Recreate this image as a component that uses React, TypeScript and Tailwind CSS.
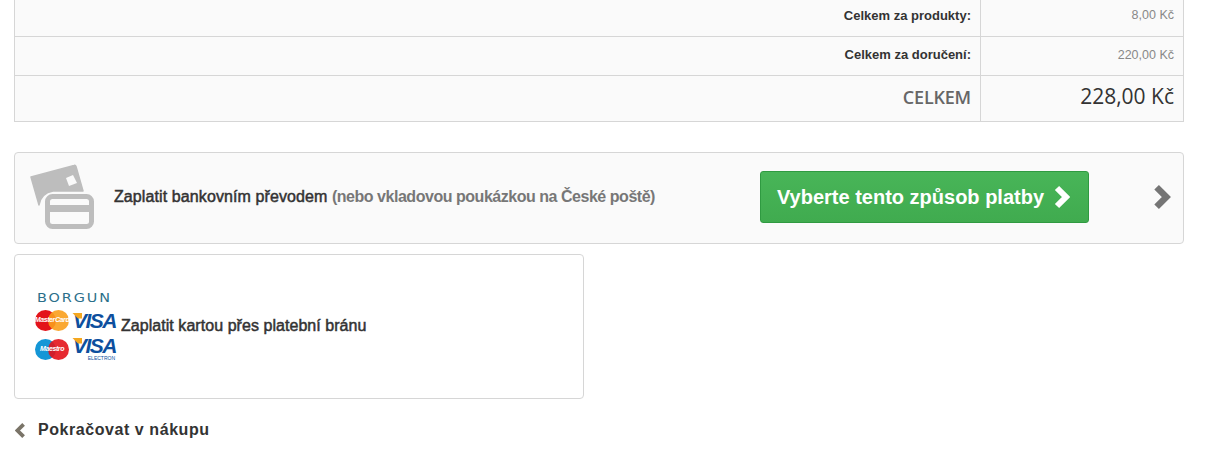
import React from "react";

const Chevron = ({ className, dir = "right", w = 5 }: { className: string; dir?: "right" | "left"; w?: number }) => (
  <svg viewBox="0 0 16 24" className={className} fill="none" stroke="currentColor" strokeWidth={w} strokeLinejoin="miter">
    <path d={dir === "right" ? "M3.5 3 L12.5 12 L3.5 21" : "M12.5 3 L3.5 12 L12.5 21"} />
  </svg>
);

const Row = ({ label, value, className }: { label: string; value: string; className: string }) => (
  <div className={`flex border-b border-[#d6d6d6] ${className}`}>
    <div className="w-[966px] shrink-0 flex items-center justify-end pr-[9px] pb-[2px] border-r border-[#d6d6d6] text-[13px] font-bold text-[#333333]">{label}</div>
    <div className="flex-1 flex items-center justify-end pr-[9px] pb-[2px] text-[12.5px] text-[#888888]">{value}</div>
  </div>
);

const CardsIcon = () => (
  <svg width="66" height="66" viewBox="0 0 66 66" className="shrink-0">
    <g transform="translate(0 1)">
      <path d="M1 12 L44 0.5 Q45.5 0 46 1.5 L53 26 L23 26 Q11 28 9 40 Z" fill="#bdbdbd" stroke="#bdbdbd" strokeWidth="1.5" strokeLinejoin="round" />
      <polygon points="36,13 43,10 47,18 39,21" fill="#fafafa" />
      <rect x="17.5" y="31.5" width="44" height="30" rx="5" fill="none" stroke="#bdbdbd" strokeWidth="5" />
      <rect x="15" y="40" width="49" height="7" fill="#bdbdbd" />
    </g>
  </svg>
);

const Pair = ({ a, b, text, sub }: { a: string; b: string; text: string; sub?: boolean }) => (
  <div className="flex items-start h-[29px]">
    <div className="relative w-[36px] h-[21px] shrink-0">
      <span className={`absolute left-0 top-0 w-[21px] h-[21px] rounded-full ${a}`} />
      <span className={`absolute left-[13px] top-0 w-[21px] h-[21px] rounded-full ${b} opacity-90`} />
      <span className="absolute left-0 w-[34px] h-[21px] flex items-center justify-center text-[7px] font-bold italic text-white tracking-[-0.4px] whitespace-nowrap">{text}</span>
    </div>
    <div className="ml-[2px] w-[43px] flex flex-col text-[#0d4f9e]">
      <div className={`relative h-[16px] leading-[16px] italic font-bold text-[21px] tracking-[-1.5px] ${sub ? "-mt-[1px]" : "mt-[3px]"}`}>
        VISA
        <span className="absolute left-[-1px] top-[0px] w-[10px] h-[6px] bg-[#f4a71f] [clip-path:polygon(0_0,100%_0,100%_100%,60%_100%)]" />
      </div>
      {sub && <span className="self-end mt-[1px] mr-[1px] text-[5px] leading-[6px]">ELECTRON</span>}
    </div>
  </div>
);

export default function App() {
  return (
    <div className="w-[1213px] h-[469px] bg-white overflow-hidden font-['Liberation_Sans',Arial,sans-serif] text-[#333333]">
      <div className="ml-[14px] w-[1170px]">
        <div className="bg-[#fafafa] border-x border-[#d6d6d6]">
          <Row className="h-[40px] -mt-[3px]" label="Celkem za produkty:" value="8,00 Kč" />
          <Row className="h-[39px]" label="Celkem za doručení:" value="220,00 Kč" />
          <div className="flex border-b border-[#d6d6d6] h-[46px]">
            <div className="w-[966px] shrink-0 flex items-center justify-end pr-[9px] pb-[3px] border-r border-[#d6d6d6] font-['Open_Sans',sans-serif] text-[18px] font-semibold tracking-[-0.2px] text-[#666666]">CELKEM</div>
            <div className="flex-1 flex items-center justify-end pr-[9px] pb-[3px] font-['Open_Sans',sans-serif] text-[21px] font-medium text-[#333333]">228,00 Kč</div>
          </div>
        </div>

        <div className="mt-[30px] h-[92px] bg-[#fafafa] border border-[#d6d6d6] rounded-[4px] flex items-center pl-[15px] pb-[2px]">
          <CardsIcon />
          <div className="ml-[18px] w-[646px] shrink-0 text-[16px] font-bold whitespace-nowrap">
            <span className="font-normal tracking-[0.1px] [-webkit-text-stroke:0.5px_#333333]">Zaplatit bankovním převodem</span>{" "}
            <span className="text-[#777777] tracking-[-0.47px]">(nebo vkladovou poukázkou na České poště)</span>
          </div>
          <div className="w-[329px] h-[52px] shrink-0 rounded-[3px] bg-gradient-to-b from-[#48b558] to-[#40ab4f] border border-[#2f9a41] flex items-center justify-center gap-[9px] text-white font-bold text-[20px] pr-[2px]">
            Vyberte tento způsob platby
            <Chevron w={6} className="w-[17px] h-[24px] text-white" />
          </div>
          <Chevron w={6} className="ml-[63px] w-[19px] h-[26px] text-[#757575]" />
        </div>

        <div className="mt-[10px] w-[570px] h-[145px] bg-white border border-[#d6d6d6] rounded-[4px] flex items-center pl-[20px]">
          <div className="w-[85px] shrink-0 pt-[5px]">
            <div className="origin-left scale-x-[1.2] text-[#2b6f8a] text-[12px] leading-[14px] tracking-[1.6px] ml-[2px] mb-[5px] font-['DejaVu_Sans',sans-serif] whitespace-nowrap">BORGUN</div>
            <Pair a="bg-[#e3131b]" b="bg-[#f99f1c]" text="MasterCard" />
            <Pair a="bg-[#1496d6]" b="bg-[#e3131b]" text="Maestro" sub />
          </div>
          <div className="ml-[1px] pb-[2px] text-[16px] tracking-[0.05px] whitespace-nowrap [-webkit-text-stroke:0.5px_#333333]">Zaplatit kartou přes platební bránu</div>
        </div>

        <div className="mt-[21px] flex items-center h-[20px]">
          <Chevron dir="left" w={5.5} className="ml-[1px] w-[11px] h-[17px] text-[#7a7468]" />
          <span className="ml-[12px] font-bold text-[16px] tracking-[0.56px] text-[#333333]">Pokračovat v nákupu</span>
        </div>
      </div>
    </div>
  );
}
